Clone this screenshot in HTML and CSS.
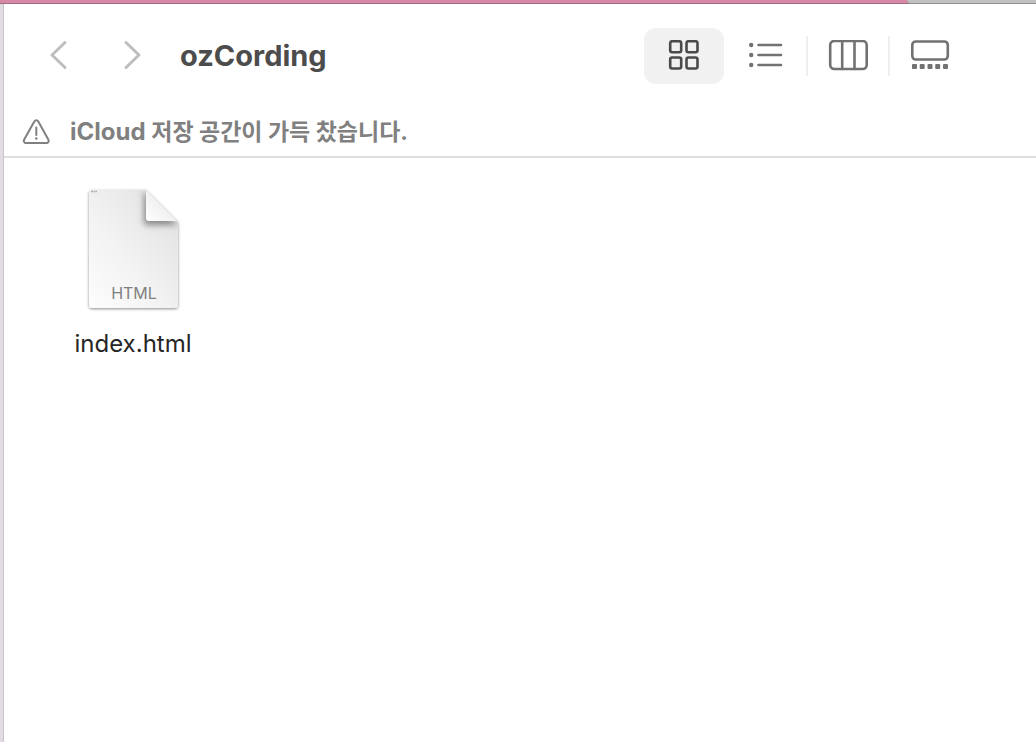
FILE: index.html
```html
<!DOCTYPE html>
<html lang="ko">
    <head>
        <meta charset="utf-8">
        <title>ozCording</title>
        <link rel="stylesheet" href="styles.css">
    </head>
    <body>
        <div class="desktop">
            <div class="tab-strip">
                <div class="tab-pink"></div>
                <div class="tab-gray"></div>
            </div>
            <div class="window">
                <header class="toolbar">
                    <nav class="history">
                        <button class="nav-button" aria-label="뒤로">
                            <svg width="20" height="32" viewBox="0 1 20 32"><path d="M17 3.500 4 16l13 12.500"/></svg>
                        </button>
                        <button class="nav-button" aria-label="앞으로">
                            <svg width="20" height="32" viewBox="0 1 20 32"><path d="M3 3.500 16 16 3 28.500"/></svg>
                        </button>
                    </nav>
                    <h1 class="title">ozCording</h1>
                    <div class="views">
                        <button class="view-button active" aria-label="아이콘">
                            <svg width="32" height="32" viewBox="0 1 32 32">
                                <rect x="2.200" y="2.200" width="11" height="11" rx="2"/>
                                <rect x="18.500" y="2.200" width="11" height="11" rx="2"/>
                                <rect x="2.200" y="18.500" width="11" height="11" rx="2"/>
                                <rect x="18.500" y="18.500" width="11" height="11" rx="2"/>
                            </svg>
                        </button>
                        <span class="divider hidden"></span>
                        <button class="view-button" aria-label="목록">
                            <svg width="36" height="32" viewBox="0 1 36 32">
                                <path d="M10.500 6H33M10.500 16H33M10.500 26H33"/>
                                <g class="fill"><circle cx="3.200" cy="6" r="2.200"/><circle cx="3.200" cy="16" r="2.200"/><circle cx="3.200" cy="26" r="2.200"/></g>
                            </svg>
                        </button>
                        <span class="divider"></span>
                        <button class="view-button" aria-label="계층">
                            <svg width="40" height="32" viewBox="0 1 40 32">
                                <rect x="2.200" y="2" width="36.500" height="28" rx="4"/>
                                <path d="M14.200 2v28M26.500 2v28"/>
                            </svg>
                        </button>
                        <span class="divider"></span>
                        <button class="view-button" aria-label="갤러리">
                            <svg width="40" height="32" viewBox="0 1 40 32">
                                <rect x="2.300" y="2.500" width="35.500" height="18" rx="3.500"/>
                                <g class="fill">
                                    <rect x="2" y="25" width="5" height="5" rx="1"/>
                                    <rect x="9.700" y="25" width="5" height="5" rx="1"/>
                                    <rect x="17.500" y="25" width="5" height="5" rx="1"/>
                                    <rect x="25.200" y="25" width="5" height="5" rx="1"/>
                                    <rect x="33" y="25" width="5" height="5" rx="1"/>
                                </g>
                            </svg>
                        </button>
                    </div>
                </header>
                <div class="notice">
                    <svg class="warning" width="28" height="26" viewBox="0 0 28 26">
                        <path d="M12.300 2.500a2.300 2.300 0 0 1 4 0l10 18.100a2.200 2.200 0 0 1-2 3.400H4.200a2.200 2.200 0 0 1-2-3.400z"/>
                        <path d="M14.300 8.500v7.500"/>
                        <circle cx="14.300" cy="19.500" r="1.300"/>
                    </svg>
                    <p>iCloud <span class="hangul">저장 공간이 가득 찼습니다.</span></p>
                </div>
                <main class="files">
                    <figure class="file">
                        <svg class="file-icon" width="100" height="128" viewBox="-1 0 100 128">
                            <defs>
                                <linearGradient id="paper" x1="0" y1="1" x2="1" y2="0">
                                    <stop offset="0" stop-color="#fdfdfd"/>
                                    <stop offset=".4" stop-color="#f3f3f3"/>
                                    <stop offset="1" stop-color="#dfdfdf"/>
                                </linearGradient>
                                <linearGradient id="fold" x1="0" y1="1" x2=".6" y2=".4">
                                    <stop offset="0" stop-color="#ffffff"/>
                                    <stop offset="1" stop-color="#eeeeee"/>
                                </linearGradient>
                                <filter id="shadow" x="-20%" y="-20%" width="140%" height="140%">
                                    <feDropShadow dx="0" dy="1" stdDeviation="1.400" flood-opacity=".45"/>
                                </filter>
                                <filter id="fold-shadow" x="-50%" y="-50%" width="200%" height="200%">
                                    <feGaussianBlur stdDeviation="3"/>
                                </filter>
                                <clipPath id="page"><path d="M8 4h54l32 32v83a3 3 0 0 1-3 3H8a3 3 0 0 1-3-3V7a3 3 0 0 1 3-3z"/></clipPath>
                            </defs>
                            <path d="M8 4h54l32 32v83a3 3 0 0 1-3 3H8a3 3 0 0 1-3-3V7a3 3 0 0 1 3-3z" fill="url(#paper)" filter="url(#shadow)"/>
                            <g clip-path="url(#page)">
                                <path d="M60 5v31q0 3 3 3h31z" fill="#888" filter="url(#fold-shadow)"/>
                            </g>
                            <path d="M62 4v28q0 3 3 3h28z" fill="url(#fold)"/>
                            <path d="M7 5.500h6" stroke="#aaa" stroke-width="1.500" stroke-linecap="butt" stroke-dasharray="2 .5"/>
                            <text class="file-kind" x="50" y="113" text-anchor="middle">HTML</text>
                        </svg>
                        <figcaption class="file-name">index.html</figcaption>
                    </figure>
                </main>
            </div>
        </div>
    </body>
</html>
```
FILE: styles.css
```css
* {
    box-sizing: border-box;
}

body {
    margin: 0;
    font-family: Inter, "Noto Sans CJK KR", sans-serif;
}

.desktop {
    display: flex;
    flex-direction: column;
    min-height: 100vh;
    background: #e1dbe2;
}

.tab-strip {
    display: flex;
    height: 4px;
    background: #d688a6;
    border-bottom: 1px solid #a56b82;
}

.tab-pink {
    flex: 7;
}

.tab-gray {
    flex: 1;
    height: 4px;
    background: #c1c1c1;
    border-bottom: 1px solid #929292;
    border-bottom-left-radius: 4px;
}

.window {
    flex: 1;
    margin-left: 3px;
    background: #fff;
    border-left: 1px solid #c9c4ca;
}

.toolbar {
    display: flex;
    align-items: center;
    height: 104px;
    padding: 0 66px 0 44px;
}

.history {
    display: flex;
    gap: 55px;
}

button {
    display: flex;
    align-items: center;
    justify-content: center;
    padding: 0;
    border: 0;
    background: none;
}

svg {
    display: block;
    fill: none;
    stroke-linecap: round;
    stroke-linejoin: round;
}

.nav-button svg {
    stroke: #bebebe;
    stroke-width: 3;
}

.title {
    margin: 0 0 0 37px;
    font-size: 29px;
    line-height: 40px;
    font-weight: 700;
    color: #4c4c4c;
}

.views {
    display: flex;
    align-items: center;
    margin-left: auto;
}

.view-button {
    width: 80px;
    height: 56px;
    border-radius: 12px;
    color: #727272;
}

.view-button.active {
    background: #f1f1f1;
    color: #4a4a4a;
}

.view-button svg {
    stroke: currentColor;
    stroke-width: 2.6;
}

.view-button .fill {
    fill: currentColor;
    stroke: none;
}

.divider {
    width: 2px;
    height: 40px;
    background: #efefef;
}

.divider.hidden {
    visibility: hidden;
}

.notice {
    display: flex;
    align-items: center;
    gap: 20px;
    height: 50px;
    padding: 0 18px;
    border-bottom: 2px solid #dedede;
    color: #808080;
}

.notice p {
    margin: 0;
    font-size: 24px;
    line-height: 32px;
    font-weight: 700;
}

.notice .hangul {
    font-size: 23px;
}

.warning {
    stroke: currentColor;
    stroke-width: 2;
}

.warning circle {
    fill: currentColor;
    stroke: none;
}

.files {
    display: flex;
    padding: 28px 49px;
}

.file {
    display: flex;
    flex-direction: column;
    align-items: center;
    gap: 14px;
    width: 160px;
    margin: 0;
}

.file-kind {
    font-size: 16px;
    fill: #808080;
}

.file-name {
    font-size: 24px;
    line-height: 32px;
    color: #262626;
}
```
